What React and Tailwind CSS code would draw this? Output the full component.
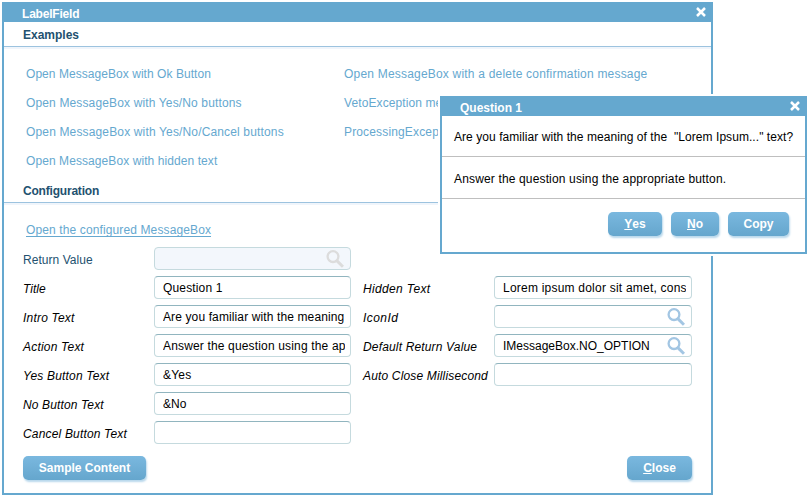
import React from "react";

function CloseIcon() {
  return (
    <svg width="10" height="10" viewBox="0 0 10 10" className="block">
      <path d="M1 1 L9 9 M9 1 L1 9" stroke="#fff" strokeWidth="2.5" fill="none" />
    </svg>
  );
}

function SearchIcon({ disabled }) {
  return (
    <svg width="18" height="18" viewBox="0 0 18 18" className={disabled ? "mr-px shrink-0 text-[#dcdcdc]" : "mr-px shrink-0 text-[#a3c6e3]"}>
      <circle cx="7" cy="6.6" r="5.4" fill="none" stroke="currentColor" strokeWidth="2.3" />
      <path d="M10.8 10.6 L17 16.8" stroke="currentColor" strokeWidth="3" />
    </svg>
  );
}

function Heading({ children, className = "" }) {
  return (
    <div className={"border-b border-[#9cc3df] shadow-[0_2px_0_#f0f5fb] pl-[19px] text-xs font-bold text-[#23516f] " + className}>
      {children}
    </div>
  );
}

function Button({ children, className }) {
  return (
    <button className={"flex h-6 items-center justify-center rounded-[5px] bg-linear-to-b from-[#7ab8df] to-[#65a6cd] text-xs font-bold text-white shadow-[1px_2px_2px_#b9d8ec] " + className}>
      {children}
    </button>
  );
}

function Field({ value, search, disabled, width, tracking = "" }) {
  return (
    <div className={"flex h-[23px] items-center overflow-hidden rounded-[4px] border border-[#c5dade] pl-2 pr-[5px] " + width + (disabled ? " bg-[#f3f7fc]" : " border-t-[#91b5bf] bg-white")}>
      <div className={"min-w-0 flex-1 overflow-hidden whitespace-pre pt-px leading-[22px] " + tracking}>{value}</div>
      {search && <SearchIcon disabled={disabled} />}
    </div>
  );
}

const left = [
  { label: "Return Value", disabled: true, search: true, lt: "tracking-[0.05px]" },
  { label: "Title", value: "Question 1", vt: "tracking-[0.15px]" },
  { label: "Intro Text", value: "Are you familiar with the meaning", lt: "tracking-[0.2px]", vt: "tracking-[0.12px]" },
  { label: "Action Text", value: "Answer the question using the ap", lt: "tracking-[0.2px]", vt: "tracking-[0.16px]" },
  { label: "Yes Button Text", value: "&Yes", lt: "tracking-[0.17px]", vt: "tracking-[0.2px]" },
  { label: "No Button Text", value: "&No", lt: "tracking-[0.13px]" },
  { label: "Cancel Button Text", lt: "tracking-[0.17px]" },
];
const right = [
  { label: "Hidden Text", value: "Lorem ipsum dolor sit amet, consectetur", lt: "tracking-[0.35px]", vt: "tracking-[0.22px]" },
  { label: "IconId", search: true, lt: "tracking-[0.45px]" },
  { label: "Default Return Value", value: "IMessageBox.NO_OPTION", search: true, lt: "tracking-[0.16px]" },
  { label: "Auto Close Millisecond", lt: "tracking-[0.16px]" },
];

function FormColumn({ rows, labelWidth, fieldWidth, className = "" }) {
  return (
    <div className={"flex flex-col gap-1.5 " + className}>
      {rows.map((r) => (
        <div key={r.label} className="flex h-[23px] items-center">
          <div className={"whitespace-nowrap pt-[2px] " + labelWidth + " " + (r.lt || "") + (r.disabled ? " text-[#23516f]" : " italic")}>{r.label}</div>
          <Field {...r} width={fieldWidth} tracking={r.vt} />
        </div>
      ))}
    </div>
  );
}

export default function App() {
  return (
    <div className="relative h-[497px] w-[809px] overflow-hidden bg-white p-0.5 font-['Liberation_Sans',Arial,sans-serif] text-xs text-black">
      <section className="flex h-[493px] w-[711px] flex-col border-2 border-t-0 border-[#65a8cf]">
        <header className="flex h-5 shrink-0 items-center justify-between bg-[#65a8cf] pl-[18px] pr-[5px] font-bold text-white">
          <span className="pt-[3px] tracking-[-0.2px]">LabelField</span>
          <CloseIcon />
        </header>
        <Heading className="h-[25px] leading-[26px]">Examples</Heading>
        <div className="flex pl-[22px] pt-[13px] leading-[29px] whitespace-nowrap text-[#65a8cf]">
          <div className="w-[318px]">
            <div className="tracking-[0.05px]">Open MessageBox with Ok Button</div>
            <div className="tracking-[0.14px]">Open MessageBox with Yes/No buttons</div>
            <div className="tracking-[0.15px]">Open MessageBox with Yes/No/Cancel buttons</div>
            <div className="tracking-[0.08px]">Open MessageBox with hidden text</div>
          </div>
          <div>
            <div className="tracking-[0.2px]">Open MessageBox with a delete confirmation message</div>
            <div className="tracking-[0.1px]">VetoException message</div>
            <div className="tracking-[0.15px]">ProcessingException message</div>
          </div>
        </div>
        <Heading className="h-[27px] leading-[30px] tracking-[-0.2px]">Configuration</Heading>
        <div className="mt-[19px] flex h-[25px] shrink-0 items-start pl-[22px] text-[#65a8cf]">
          <span className="h-[15px] border-b border-[#65a8cf] leading-[17px] tracking-[0.12px]">Open the configured MessageBox</span>
        </div>
        <div className="flex pl-[19px]">
          <FormColumn rows={left} labelWidth="w-[131px]" fieldWidth="w-[197px]" />
          <FormColumn rows={right} labelWidth="w-[131px]" fieldWidth="w-[198px]" className="ml-3 pt-[29px]" />
        </div>
        <footer className="mt-3 flex justify-between pl-[19px] pr-[19px]">
          <Button className="w-[123px]">Sample Content</Button>
          <Button className="w-[65px]"><span className="underline">C</span>lose</Button>
        </footer>
      </section>

      <section className="absolute left-[440px] top-24 h-[158px] w-[367px] border-2 border-t-0 border-[#65a8cf] bg-white shadow-[0_0_0_2px_#fff]">
        <header className="flex h-5 items-center justify-between bg-[#65a8cf] pl-[18px] pr-[5px] font-bold text-white">
          <span className="pt-[3px]">Question 1</span>
          <CloseIcon />
        </header>
        <div className="h-[41px] whitespace-pre border-b border-[#bfbfbf] pl-3 leading-[43px] tracking-[0.06px]">{'Are you familiar with the meaning of the  "Lorem Ipsum..." text?'}</div>
        <div className="h-[42px] border-b border-[#bfbfbf] pl-3 leading-[45px] tracking-[0.15px]">Answer the question using the appropriate button.</div>
        <div className="flex justify-end gap-[9px] pr-4 pt-[13px]">
          <Button className="w-[54px]"><span className="underline">Y</span>es</Button>
          <Button className="w-12"><span className="underline">N</span>o</Button>
          <Button className="w-[61px]">Copy</Button>
        </div>
      </section>
    </div>
  );
}
